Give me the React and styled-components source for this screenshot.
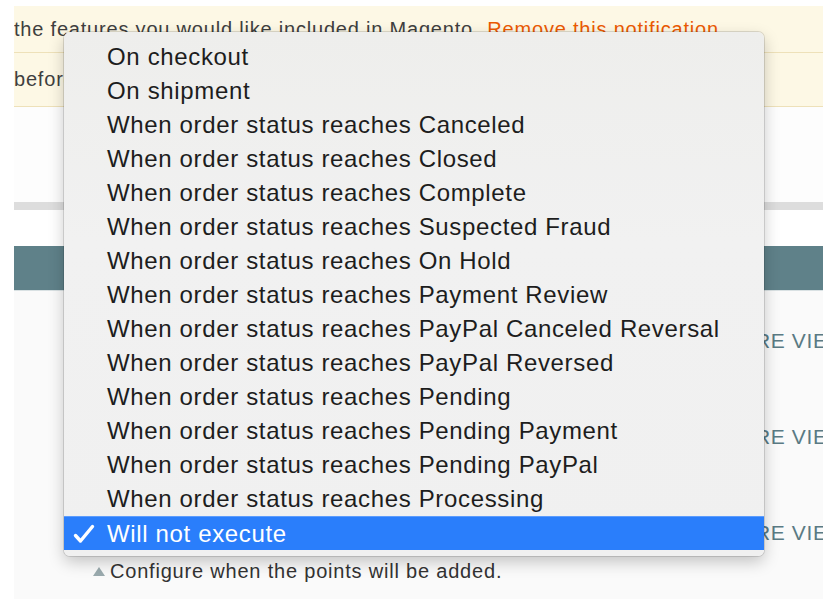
import React from 'react'
import styled, { createGlobalStyle } from 'styled-components'

const GlobalStyle = createGlobalStyle`
  html, body {
    margin: 0;
    padding: 0;
    background: #ffffff;
  }
  body {
    font-family: "Liberation Sans", Arial, sans-serif;
  }
`

const Page = styled.div`
  position: relative;
  width: 830px;
  height: 616px;
  overflow: hidden;
  background: #ffffff;
`

const Content = styled.div`
  margin: 6px 0 0 14px;
  width: 809px;
  height: 593px;
  overflow: hidden;
  background: #fafafa;
  display: flex;
  flex-direction: column;
`

const Notice = styled.div`
  height: ${({ h }) => h}px;
  flex: none;
  display: flex;
  align-items: center;
  background: #fdf8e5;
  border-bottom: 1px solid #eee1b9;
  font-size: 20px;
  letter-spacing: 0.8px;
  color: #3f3f3f;
  white-space: nowrap;
`

const RemoveLink = styled.span`
  color: #eb5a02;
  margin-left: 8px;
`

const Blank = styled.div`
  height: ${({ h }) => h}px;
  flex: none;
  background: ${({ bg }) => bg || '#fdfdfd'};
`

const SectionHead = styled.div`
  height: 44px;
  flex: none;
  background: #5f8189;
  border-bottom: 1px solid #d9e1e3;
`

const Row = styled.div`
  display: grid;
  grid-template-columns: 706px 1fr;
  height: 96px;
  flex: none;
  box-sizing: border-box;
  padding-top: 38px;
`

const FieldCol = styled.div`
  display: flex;
  flex-direction: column;
  padding-left: 79px;
`

const FieldSpace = styled.div`
  height: 24px;
`

const Note = styled.div`
  margin-top: 14px;
  display: flex;
  align-items: center;
  gap: 5px;
  font-size: 20px;
  line-height: 24px;
  letter-spacing: 0.8px;
  color: #333333;
  white-space: nowrap;
`

const NoteArrow = styled.span`
  width: 0;
  height: 0;
  border-left: 6px solid transparent;
  border-right: 6px solid transparent;
  border-bottom: 9px solid #9aaaae;
`

const MoreLink = styled.div`
  font-size: 21px;
  line-height: 24px;
  color: #5a7a84;
  white-space: nowrap;
  letter-spacing: 0.6px;
`

const Menu = styled.ul`
  position: absolute;
  left: 64px;
  top: 32px;
  width: 700px;
  margin: 0;
  padding: 8px 0 6px;
  list-style: none;
  background: linear-gradient(#eeeeec, #f1f1f1 40%, #f0f0f0);
  border-radius: 6px;
  box-shadow: 0 0 0 1px rgba(0, 0, 0, 0.12), 0 6px 16px rgba(0, 0, 0, 0.22);
  box-sizing: border-box;
`

const Item = styled.li`
  position: relative;
  height: 34px;
  display: flex;
  align-items: center;
  padding-left: 43px;
  font-size: 24px;
  letter-spacing: 0.65px;
  color: ${({ selected }) => (selected ? '#ffffff' : '#1d1d1d')};
  background: ${({ selected }) => (selected ? '#2a7efb' : 'transparent')};
  border-top: ${({ selected }) => (selected ? '1px solid #5c9cfd' : 'none')};
  box-sizing: border-box;
  white-space: nowrap;
`

const Check = styled.svg`
  position: absolute;
  left: 9px;
  top: 7px;
`

const options = [
  'On checkout',
  'On shipment',
  'When order status reaches Canceled',
  'When order status reaches Closed',
  'When order status reaches Complete',
  'When order status reaches Suspected Fraud',
  'When order status reaches On Hold',
  'When order status reaches Payment Review',
  'When order status reaches PayPal Canceled Reversal',
  'When order status reaches PayPal Reversed',
  'When order status reaches Pending',
  'When order status reaches Pending Payment',
  'When order status reaches Pending PayPal',
  'When order status reaches Processing',
  'Will not execute',
]

const App = () => {
  return (
    <Page>
      <GlobalStyle />
      <Content>
        <Notice h={46}>
          the features you would like included in Magento.
          <RemoveLink>Remove this notification</RemoveLink>
        </Notice>
        <Notice h={53}>before they are applied.</Notice>
        <Blank h={95} />
        <Blank h={8} bg="#dddddd" />
        <Blank h={36} bg="#ffffff" />
        <SectionHead />
        <Row>
          <FieldCol />
          <MoreLink>MORE VIEWS</MoreLink>
        </Row>
        <Row>
          <FieldCol />
          <MoreLink>MORE VIEWS</MoreLink>
        </Row>
        <Row>
          <FieldCol>
            <FieldSpace />
            <Note>
              <NoteArrow />
              Configure when the points will be added.
            </Note>
          </FieldCol>
          <MoreLink>MORE VIEWS</MoreLink>
        </Row>
      </Content>
      <Menu>
        {options.map((o) => {
          const selected = o === 'Will not execute'
          return (
            <Item key={o} selected={selected}>
              {selected && (
                <Check width="22" height="20" viewBox="0 0 22 20">
                  <path d="M2.5 11.5 L7.5 17 L19.5 2.5" fill="none" stroke="#ffffff" strokeWidth="3.4" strokeLinecap="round" strokeLinejoin="round" />
                </Check>
              )}
              {o}
            </Item>
          )
        })}
      </Menu>
    </Page>
  )
}

export default App
